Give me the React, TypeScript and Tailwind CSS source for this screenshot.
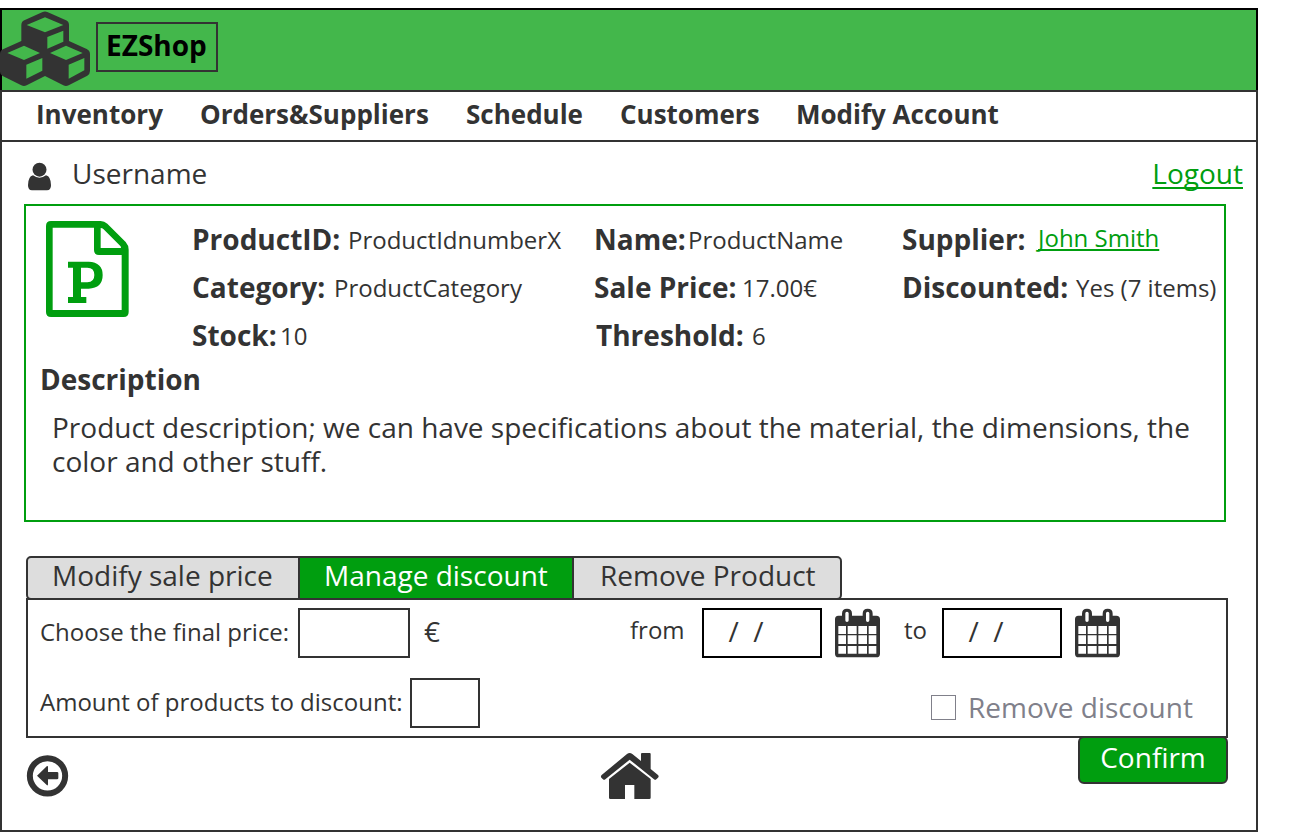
import type { ReactNode } from "react";

function CubesIcon() {
  return (
    <svg className="h-[77px] w-[91px] shrink-0" viewBox="0 30 273 231">
      <path
        fill="#333333"
        fillRule="evenodd"
        d="M128 36Q135 33 142 36L198 61Q207 65 207 75V123L260 147Q270 152 270 162V213Q270 222 262 227L206 256Q198 260 190 256L135 228L80 256Q72 260 64 256L8 228Q0 224 0 215V162Q0 152 9 148L64 123V75Q64 65 73 61ZM135 52L80 75L135 97L190 75ZM142 111V146L190 125V92ZM72 137L22 159L72 180L120 159ZM79 194V236L127 212V174ZM198 137L150 159L198 180L248 159ZM206 194V236L253 211V174Z"
      />
    </svg>
  );
}

function UserIcon() {
  return (
    <svg className="h-[29px] w-[23px] shrink-0" viewBox="84 486 69 87" fill="#333333">
      <circle cx="118.500" cy="509" r="21" />
      <path d="M99 526Q108 533 118.500 533Q129 533 138 526Q153 530 153 556Q153 571 141 571H96Q84 571 84 556Q84 530 99 526Z" />
    </svg>
  );
}

function ProductIcon() {
  return (
    <svg className="h-[98px] w-[83px] shrink-0" viewBox="138 60 249 294" fill="#009e0f">
      <path
        fillRule="evenodd"
        d="M153 63H302Q313 63 322 71L377 126Q386 136 386 149V336Q386 351 371 351H153Q138 351 138 336V78Q138 63 153 63ZM158 83V330H365V165H297Q282 165 282 150V83ZM302 84V144H363Q363 140 361 138L310 87Q307 84 302 84Z"
      />
      <path
        fillRule="evenodd"
        d="M204 185H266Q308 187 308 225Q308 264 266 266H243V291H259V309H204V291H219V203H204ZM243 203V247H262Q283 247 283 225Q283 203 262 203Z"
      />
    </svg>
  );
}

function CalendarIcon() {
  return (
    <svg className="h-[50px] w-[47px] shrink-0" viewBox="822 204 141 150">
      <path
        fill="#333333"
        fillRule="evenodd"
        d="M835 227H846V221Q846 206 861 206Q876 206 876 221V227H908V221Q908 206 923 206Q938 206 938 221V227H949Q960 227 960 238V341Q960 352 949 352H836Q825 352 825 341V238Q825 227 835 227ZM856 220V241Q856 246 861 246Q866 246 866 241V220Q866 215 861 215Q856 215 856 220ZM918 220V241Q918 246 923 246Q928 246 928 241V220Q928 215 923 215Q918 215 918 220ZM835 258V282H858V258ZM863 258V282H890V258ZM895 258V282H921V258ZM926 258V282H949V258ZM835 286V312H858V286ZM863 286V312H890V286ZM895 286V312H921V286ZM926 286V312H949V286ZM835 318V341H858V318ZM863 318V341H890V318ZM895 318V341H921V318ZM926 318V341H949V318Z"
      />
    </svg>
  );
}

function BackIcon() {
  return (
    <svg className="h-[44px] w-[43px] shrink-0" viewBox="78 642 129 132">
      <circle cx="142.500" cy="707.500" r="53" fill="none" stroke="#333333" strokeWidth="18" />
      <path fill="#333333" d="M111 707L141 678Q144 677 144 681V696H171Q175 696 175 699V715Q175 718 171 718H144V733Q144 737 141 736Z" />
    </svg>
  );
}

function HomeIcon() {
  return (
    <svg className="h-[48px] w-[60px] shrink-0" viewBox="120 636 180 144" fill="#333333">
      <path d="M201 642Q209 636 217 642L243 663V642Q243 639 246 639H269Q272 639 272 642V687L294 705Q298 709 294 713L289 718Q286 721 282 718L209 659L136 718Q132 721 129 718L124 713Q121 709 125 705Z" />
      <path d="M209 668L272 717V773Q272 777 268 777H223V735H195V777H151Q147 777 147 773V717Z" />
    </svg>
  );
}

const LABEL = "shrink-0 whitespace-nowrap text-[28px] font-bold leading-[48px]";
const VALUE = "shrink-0 whitespace-nowrap pt-px text-[24px] leading-[47px]";
const LINK = "shrink-0 whitespace-nowrap text-[#009e0f] underline decoration-2 [text-decoration-skip-ink:none]";

function Tab({ children, className }: { children: ReactNode; className: string }) {
  return (
    <button className={`flex h-full shrink-0 items-start whitespace-nowrap text-left text-[28px] leading-[35px] ${className}`}>
      {children}
    </button>
  );
}

function DateBox() {
  return (
    <div className="h-[50px] w-[120px] shrink-0 whitespace-pre border-2 border-black pl-[24.5px] text-[28px] leading-[43px]">
      {"/  /"}
    </div>
  );
}

export default function App() {
  return (
    <div className="h-[832px] w-[1312px] overflow-hidden bg-white pt-2 font-['Open_Sans',sans-serif] text-[#333333]">
      <div className="flex h-[824px] w-[1258px] flex-col">
        <header className="flex h-[82px] shrink-0 items-start border-x-2 border-t-2 border-black bg-[#43b74b]">
          <div className="-ml-[2px] flex">
            <CubesIcon />
          </div>
          <div className="ml-[5px] mt-3 h-[50px] w-[122px] border-2 border-[#333333] pl-2 text-[28px] font-bold leading-[42px] text-black">
            EZShop
          </div>
        </header>

        <nav className="flex h-[52px] shrink-0 border-2 border-[#333333] text-[26px] font-bold leading-[44px]">
          <a className="ml-[34px] w-[164px] shrink-0">Inventory</a>
          <a className="w-[266px] shrink-0">Orders&amp;Suppliers</a>
          <a className="w-[154px] shrink-0">Schedule</a>
          <a className="w-[176px] shrink-0">Customers</a>
          <a className="shrink-0">Modify Account</a>
        </nav>

        <main className="flex grow flex-col border-x-2 border-b-2 border-[#333333]">
          <div className="flex h-[62px] items-start pl-[26px] pr-[13px]">
            <div className="mt-5 flex">
              <UserIcon />
            </div>
            <span className="ml-[21px] mt-2 text-[28px] leading-[46px]">Username</span>
            <a className={`${LINK} ml-auto mt-2 text-[28px] leading-[46px] underline-offset-[3px]`}>Logout</a>
          </div>

          <section className="ml-[22px] h-[318px] w-[1202px] shrink-0 border-2 border-[#009e0f]">
            <div className="flex">
              <div className="ml-5 mt-[14px] flex w-[146px] shrink-0">
                <ProductIcon />
              </div>
              <div className="mt-[9px] w-[402px] shrink-0">
                <div className="flex">
                  <span className={`${LABEL} w-[156px]`}>ProductID:</span>
                  <span className={VALUE}>ProductIdnumberX</span>
                </div>
                <div className="flex">
                  <span className={`${LABEL} w-[142px]`}>Category:</span>
                  <span className={VALUE}>ProductCategory</span>
                </div>
                <div className="flex">
                  <span className={`${LABEL} w-[88px]`}>Stock:</span>
                  <span className={VALUE}>10</span>
                </div>
              </div>
              <div className="mt-[9px] w-[308px] shrink-0">
                <div className="flex">
                  <span className={`${LABEL} w-[94px]`}>Name:</span>
                  <span className={VALUE}>ProductName</span>
                </div>
                <div className="flex">
                  <span className={`${LABEL} w-[148px]`}>Sale Price:</span>
                  <span className={VALUE}>17.00€</span>
                </div>
                <div className="flex pl-[2px]">
                  <span className={`${LABEL} w-[156px]`}>Threshold:</span>
                  <span className={VALUE}>6</span>
                </div>
              </div>
              <div className="mt-[9px] shrink-0">
                <div className="flex">
                  <span className={`${LABEL} w-[136px]`}>Supplier:</span>
                  <a className={`${LINK} text-[24px] leading-[46px] underline-offset-2`}>John Smith</a>
                </div>
                <div className="flex">
                  <span className={`${LABEL} w-[174px]`}>Discounted:</span>
                  <span className={VALUE}>Yes (7 items)</span>
                </div>
              </div>
            </div>
            <h2 className="pl-[14px] text-[28px] font-bold leading-[40px]">Description</h2>
            <p className="mt-[11px] whitespace-nowrap pl-[26px] text-[28px] leading-[34px]">
              Product description; we can have specifications about the material, the dimensions, the
              <br />
              color and other stuff.
            </p>
          </section>

          <div className="ml-[24px] mt-[34px] flex h-[44px] w-[816px] shrink-0 overflow-hidden rounded-[5px] border-2 border-[#333333] bg-[#dddddd]">
            <Tab className="w-[270px] pl-6">Modify sale price</Tab>
            <Tab className="w-[276px] border-x-2 border-[#333333] bg-[#009e0f] pl-6 text-white">Manage discount</Tab>
            <Tab className="w-[266px] pl-[26px]">Remove Product</Tab>
          </div>

          <section className="-mt-[2px] ml-[24px] h-[140px] w-[1202px] shrink-0 border-2 border-[#333333]">
            <div className="flex h-[70px] items-start pl-3 pt-2">
              <span className="w-[258px] shrink-0 whitespace-nowrap text-[24px] leading-[48px]">Choose the final price:</span>
              <div className="h-[50px] w-[112px] shrink-0 border-2 border-[#333333]" />
              <span className="ml-[14px] w-[206px] shrink-0 text-[28px] leading-[47px]">€</span>
              <span className="w-[72px] shrink-0 text-[24px] leading-[44px]">from</span>
              <DateBox />
              <div className="ml-3 flex">
                <CalendarIcon />
              </div>
              <span className="ml-[23px] w-[38px] shrink-0 text-[24px] leading-[44px]">to</span>
              <DateBox />
              <div className="ml-3 flex">
                <CalendarIcon />
              </div>
            </div>
            <div className="flex h-[66px] items-start pl-3 pt-2">
              <span className="w-[370px] shrink-0 whitespace-nowrap text-[24px] leading-[48px]">
                Amount of products to discount:
              </span>
              <div className="h-[50px] w-[70px] shrink-0 border-2 border-[#333333]" />
              <label className="ml-[451px] flex text-[28px] leading-[58px] text-[#80808a]">
                <span className="mt-[17px] h-[25px] w-[25px] border border-[#80808a]" />
                <span className="ml-3 whitespace-nowrap">Remove discount</span>
              </label>
            </div>
          </section>

          <footer className="flex items-start">
            <div className="ml-[24px] mt-4 flex">
              <BackIcon />
            </div>
            <div className="ml-[531px] mt-[14px] flex">
              <HomeIcon />
            </div>
            <button className="-mt-[2px] ml-[418px] h-[48px] w-[150px] rounded-[6px] border-2 border-[#333333] bg-[#009e0f] pb-[6px] text-[28px] leading-[38px] text-white">
              Confirm
            </button>
          </footer>
        </main>
      </div>
    </div>
  );
}
